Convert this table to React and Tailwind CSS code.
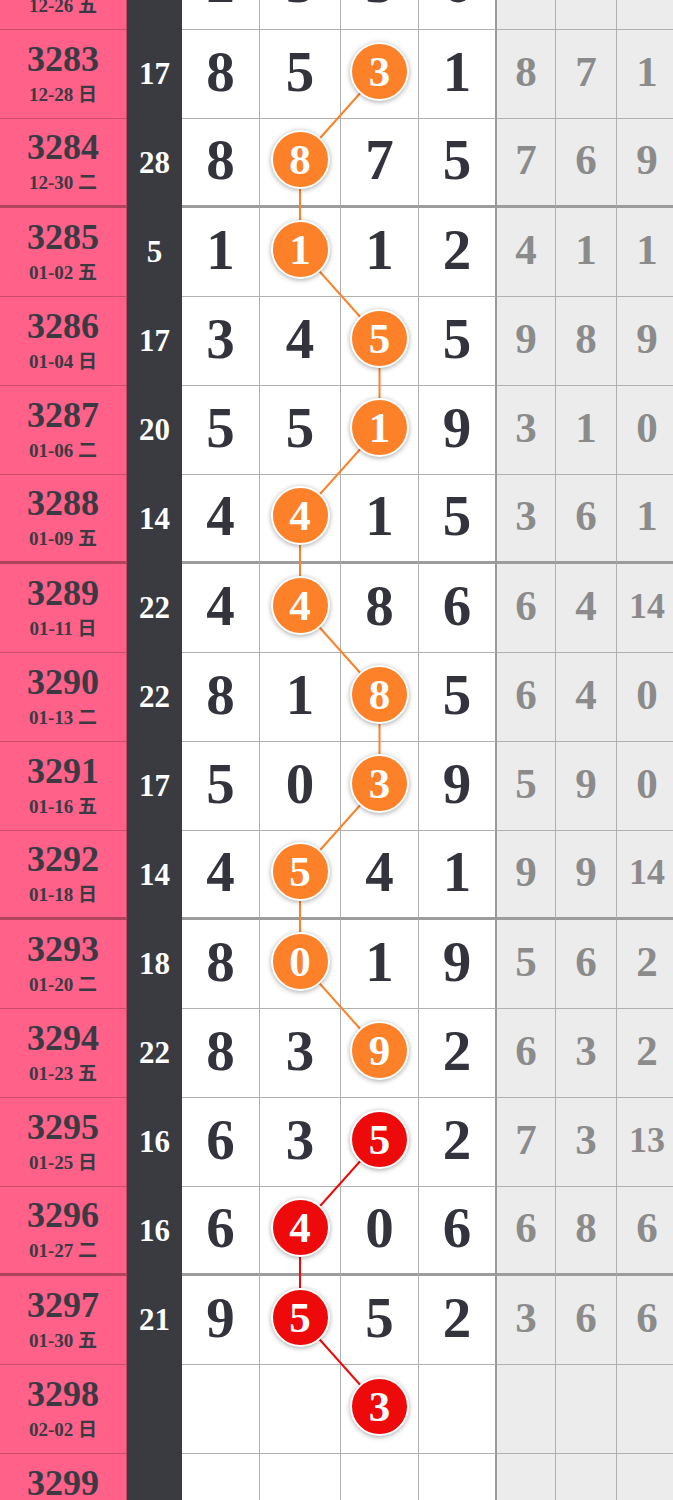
import React from "react";

const rows = [
  { n: 3282, d: "12-26", wd: "五", s: 16, w: [2, 5, 3, 6], g: ["", "", ""] },
  { n: 3283, d: "12-28", wd: "日", s: 17, w: [8, 5, 3, 1], g: [8, 7, 1], b: 2, c: "o" },
  { n: 3284, d: "12-30", wd: "二", s: 28, w: [8, 8, 7, 5], g: [7, 6, 9], b: 1, c: "o" },
  { n: 3285, d: "01-02", wd: "五", s: 5, w: [1, 1, 1, 2], g: [4, 1, 1], b: 1, c: "o" },
  { n: 3286, d: "01-04", wd: "日", s: 17, w: [3, 4, 5, 5], g: [9, 8, 9], b: 2, c: "o" },
  { n: 3287, d: "01-06", wd: "二", s: 20, w: [5, 5, 1, 9], g: [3, 1, 0], b: 2, c: "o" },
  { n: 3288, d: "01-09", wd: "五", s: 14, w: [4, 4, 1, 5], g: [3, 6, 1], b: 1, c: "o" },
  { n: 3289, d: "01-11", wd: "日", s: 22, w: [4, 4, 8, 6], g: [6, 4, 14], b: 1, c: "o" },
  { n: 3290, d: "01-13", wd: "二", s: 22, w: [8, 1, 8, 5], g: [6, 4, 0], b: 2, c: "o" },
  { n: 3291, d: "01-16", wd: "五", s: 17, w: [5, 0, 3, 9], g: [5, 9, 0], b: 2, c: "o" },
  { n: 3292, d: "01-18", wd: "日", s: 14, w: [4, 5, 4, 1], g: [9, 9, 14], b: 1, c: "o" },
  { n: 3293, d: "01-20", wd: "二", s: 18, w: [8, 0, 1, 9], g: [5, 6, 2], b: 1, c: "o" },
  { n: 3294, d: "01-23", wd: "五", s: 22, w: [8, 3, 9, 2], g: [6, 3, 2], b: 2, c: "o" },
  { n: 3295, d: "01-25", wd: "日", s: 16, w: [6, 3, 5, 2], g: [7, 3, 13], b: 2, c: "r" },
  { n: 3296, d: "01-27", wd: "二", s: 16, w: [6, 4, 0, 6], g: [6, 8, 6], b: 1, c: "r" },
  { n: 3297, d: "01-30", wd: "五", s: 21, w: [9, 5, 5, 2], g: [3, 6, 6], b: 1, c: "r" },
  { n: 3298, d: "02-02", wd: "日", s: "", w: ["", "", 3, ""], g: ["", "", ""], b: 2, c: "r" },
  { n: 3299, d: "02-04", wd: "二", s: "", w: ["", "", "", ""], g: ["", "", ""] },
];

const ROW_H = 89;
const colX = [39, 118, 197.5, 275];
const whiteW = ["w-[78px]", "w-[81px]", "w-[78px]", "w-[78px]"];
const grayW = ["w-[59px]", "w-[61px]", "w-[60px]"];

const serif = "font-['Liberation_Serif','Noto_Sans_CJK_SC',serif]";

function Ball({ value, color }) {
  return (
    <div
      className={`relative z-10 flex h-[59px] w-[59px] items-center justify-center rounded-full border-2 border-white text-[43px] leading-none text-white shadow-[0_1px_5px_rgba(0,0,0,0.35)] ${
        color === "r" ? "bg-[#ee0a0a]" : "bg-[#fd8128]"
      }`}
    >
      {value}
    </div>
  );
}

function Row({ row }) {
  const thick = row.n % 4 === 0;
  const line = thick ? "border-b-[3px] border-[#9c9c9c]" : "border-b border-[#b0b0b0]";
  return (
    <div className="flex h-[89px] flex-none">
      <div
        className={`flex w-[127px] flex-none flex-col items-center justify-center border-r border-r-black/25 bg-[#ff6189] text-[#3a3a44] ${
          thick ? "border-b-[3px] border-b-black/30" : "border-b border-b-black/20"
        }`}
      >
        <div className="text-[36px] font-bold leading-[41px]">{row.n}</div>
        <div className="text-[19px] font-bold leading-[29px]">
          {row.d} {row.wd}
        </div>
      </div>
      <div className="flex w-[55px] flex-none items-center justify-center bg-[#3a3a41] text-[31px] font-bold text-white">
        {row.s}
      </div>
      {row.w.map((v, i) => (
        <div
          key={i}
          className={`flex flex-none items-center justify-center bg-white pb-[5px] text-[57px] font-bold leading-none text-[#33333d] ${whiteW[i]} ${line} ${
            i === 3 ? "border-r-2 border-r-[#999]" : "border-r border-r-[#b0b0b0]"
          }`}
        >
          {row.b === i ? <Ball value={v} color={row.c} /> : v}
        </div>
      ))}
      {row.g.map((v, i) => (
        <div
          key={i}
          className={`flex flex-none items-center justify-center bg-[#ececec] pb-[5px] font-bold leading-none text-[#8b8b8b] ${grayW[i]} ${line} ${
            String(v).length > 1 ? "text-[36px]" : "text-[43px]"
          } ${i < 2 ? "border-r border-r-[#b0b0b0]" : ""}`}
        >
          {v}
        </div>
      ))}
    </div>
  );
}

function Links() {
  const segs = [];
  for (let i = 0; i < rows.length - 1; i++) {
    const a = rows[i];
    const b = rows[i + 1];
    if (a.b === undefined || b.b === undefined || a.c !== b.c) continue;
    segs.push({
      x1: colX[a.b],
      y1: i * ROW_H + 41.5,
      x2: colX[b.b],
      y2: (i + 1) * ROW_H + 41.5,
      stroke: a.c === "r" ? "#ee0a0a" : "#fd8128",
    });
  }
  return (
    <svg
      className="pointer-events-none absolute left-[182px] top-0"
      width="315"
      height={rows.length * ROW_H}
    >
      {segs.map((s, i) => (
        <line key={i} x1={s.x1} y1={s.y1} x2={s.x2} y2={s.y2} stroke={s.stroke} strokeWidth="2" />
      ))}
    </svg>
  );
}

export default function App() {
  return (
    <div className={`h-[1500px] w-[673px] overflow-hidden bg-white ${serif}`}>
      <div className="relative -mt-[59px] flex flex-col">
        {rows.map((row) => (
          <Row key={row.n} row={row} />
        ))}
        <Links />
      </div>
    </div>
  );
}
